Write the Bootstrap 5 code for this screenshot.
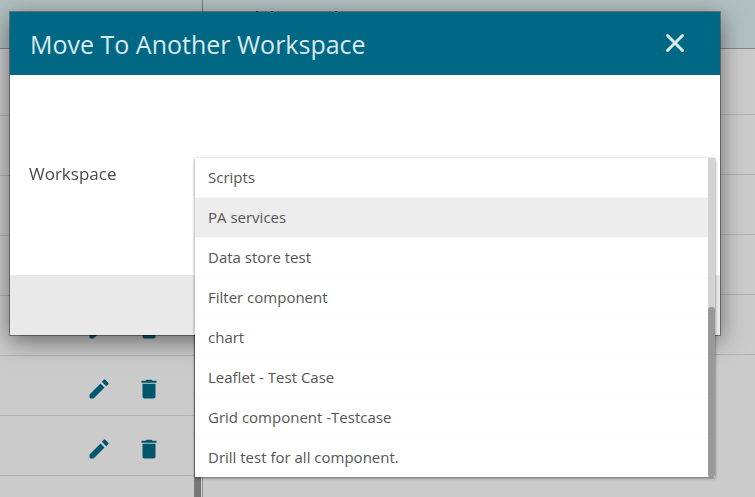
<!DOCTYPE html>
<html lang="en">
<head>
<meta charset="utf-8">
<meta name="viewport" content="width=device-width, initial-scale=1">
<title>Move To Another Workspace</title>
<link href="https://cdn.jsdelivr.net/npm/bootstrap@5.3.0/dist/css/bootstrap.min.css" rel="stylesheet">
<style>
  body { font-family: "Open Sans", "Noto Sans", sans-serif; background: #cbcbcb; color: #444; }
  .page-head { height: 49px; background: #b1bfc1; border-bottom: 1px solid #838888; }
  .side { width: 203px; flex: none; border-right: 1px solid #7b7b7b; }
  .side-list { border-right: 1px solid #999; width: 203px; flex: none; }
  .line { height: 60px; border-bottom: 1px solid #b0b0b0; }
  .side-list .line:first-child { height: 67px; }
  .detail .line:first-child { height: 66px; }
  .rowed { gap: 26px; padding: 6px 33px 0 0; }
  .side-thumb { width: 7px; margin-right: 1px; background: #787878; }
  .icon-btn { color: #00566d; width: 24px; height: 24px; line-height: 0; }
  .tick { fill: #222; left: 53px; top: 10px; }
  .move-dialog { max-width: none; margin: 12px 35px 0 10px; pointer-events: auto; }
  .move-box { border: 0; border-radius: 0; box-shadow: 0 0 0 1px rgba(0,0,0,.35), 0 6px 22px rgba(0,0,0,.5); }
  .move-head { height: 63px; background: #006884; color: #d9eaef; padding: 0 32px 0 20px; border: 0; border-radius: 0; }
  .move-title { font-size: 25px; line-height: 34px; font-weight: 400; }
  .close-x { color: #d9eaef; line-height: 0; }
  .move-body { height: 200px; padding: 83px 5px 0 19px; }
  .move-label { width: 166px; flex: none; font-size: 17px; line-height: 32px; color: #4a4a4a; }
  .move-foot { height: 60px; background: #e9e9e9; }
  .choice-menu { top: 0; left: 0; z-index: 5; background: #fff; box-shadow: 0 1px 3px rgba(0,0,0,.5); }
  .choice { height: 40px; padding: 0 13px; border: 0; border-bottom: 1px solid #f8f8f8; font-size: 15px; color: #555; background: #fff; }
  .choice:last-child { height: 39px; border: 0; }
  .choice.picked { background: #ededed; }
  .track { width: 7px; flex: none; background: #d3d3d3; }
  .thumb { height: 170px; background: #999; border-radius: 3px; }
</style>
<script src="https://cdn.jsdelivr.net/npm/bootstrap@5.3.0/dist/js/bootstrap.bundle.min.js"></script>
</head>
<body class="overflow-hidden">
<svg class="d-none" aria-hidden="true">
  <symbol id="pencil" viewBox="0 0 24 24"><path d="M2.500 17.500V20q0 1.500 1.500 1.500h2.500L17.500 10.500l-4-4zM21.200 7.200a1 1 0 0 0 0-1.500l-2.900-2.900a1 1 0 0 0-1.500 0l-2 2 4.400 4.400z"/></symbol>
  <symbol id="bin" viewBox="0 0 24 24"><path d="M5.500 19.500q0 2 2 2h9q2 0 2-2V6.800h-13zM19.500 3.700h-4l-1-1h-5l-1 1h-4v2h15z"/></symbol>
</svg>
<div class="vh-100 d-flex flex-column">
  <header class="page-head d-flex">
    <div class="side"></div>
    <div class="position-relative flex-grow-1">
      <svg class="tick position-absolute" width="84" height="2" aria-hidden="true"><path d="M0 1h2v1H0zM15 1h2v1h-2zM79 1h2v1h-2z"/></svg>
    </div>
  </header>
  <main class="d-flex flex-grow-1 overflow-hidden">
    <div class="side-list d-flex overflow-hidden">
      <div class="flex-grow-1">
        <div class="line"></div><div class="line"></div><div class="line"></div><div class="line"></div>
        <div class="line rowed"></div><div class="line rowed"></div><div class="line rowed"></div>
      </div>
      <div class="side-thumb"></div>
    </div>
    <div class="detail flex-grow-1">
      <div class="line"></div><div class="line"></div><div class="line"></div><div class="line"></div><div class="line"></div>
    </div>
  </main>
</div>
<div class="modal d-block" role="dialog" aria-labelledby="moveTitle">
  <div class="modal-dialog move-dialog">
    <div class="modal-content move-box">
      <div class="modal-header move-head">
        <h1 class="move-title mb-0" id="moveTitle">Move To Another Workspace</h1>
        <button type="button" class="btn p-0 border-0 close-x" aria-label="Close">
          <svg width="26" height="26" viewBox="0 0 26 26" fill="none" stroke="currentColor" stroke-width="3" stroke-linecap="round"><path d="M5.500 4.500l15 15M20.500 4.500l-15 15"/></svg>
        </button>
      </div>
      <div class="move-body d-flex align-items-start">
        <label class="move-label" for="workspace">Workspace</label>
        <div class="position-relative flex-grow-1">
          <select class="form-select" id="workspace"><option>PA services</option></select>
          <div class="choice-menu position-absolute w-100 d-flex">
            <div class="flex-grow-1" id="choices" role="listbox" aria-label="Workspace">
              <button type="button" role="option" class="choice d-block w-100 text-start">Scripts</button>
              <button type="button" role="option" aria-selected="true" class="choice picked d-block w-100 text-start">PA services</button>
              <button type="button" role="option" class="choice d-block w-100 text-start">Data store test</button>
              <button type="button" role="option" class="choice d-block w-100 text-start">Filter component</button>
              <button type="button" role="option" class="choice d-block w-100 text-start">chart</button>
              <button type="button" role="option" class="choice d-block w-100 text-start">Leaflet - Test Case</button>
              <button type="button" role="option" class="choice d-block w-100 text-start">Grid component -Testcase</button>
              <button type="button" role="option" class="choice d-block w-100 text-start">Drill test for all component.</button>
            </div>
            <div class="track d-flex flex-column justify-content-end"><div class="thumb"></div></div>
          </div>
        </div>
      </div>
      <div class="move-foot"></div>
    </div>
  </div>
</div>
<script>
  // Edit and delete buttons for each listed entry
  document.querySelectorAll('.rowed').forEach(function (row) {
    row.classList.add('d-flex', 'align-items-center', 'justify-content-end');
    row.innerHTML = [['pencil', 'Edit'], ['bin', 'Delete']].map(function (b) {
      return '<button type="button" class="btn p-0 border-0 icon-btn" aria-label="' + b[1] + '">' +
        '<svg width="24" height="24" fill="currentColor"><use href="#' + b[0] + '"/></svg></button>';
    }).join('');
  });
</script>
</body>
</html>
